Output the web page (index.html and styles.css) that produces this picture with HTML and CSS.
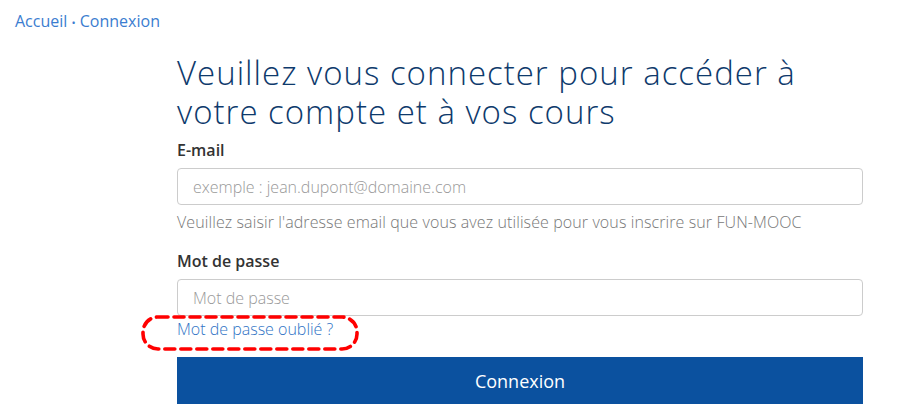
FILE: index.html
```html
<!DOCTYPE html>
<html lang="fr">
<head>
<meta charset="utf-8">
<title>Connexion</title>
<link rel="stylesheet" href="styles.css">
</head>
<body>
<nav class="breadcrumb"><a href="#">Accueil</a> <span class="sep">•</span> <a href="#">Connexion</a></nav>
<main class="login">
  <h1 class="title">Veuillez vous connecter pour accéder à votre compte et à vos cours</h1>
  <form class="form">
    <label class="label" for="email">E-mail</label>
    <input class="field" id="email" type="email" placeholder="exemple : jean.dupont@domaine.com">
    <p class="help">Veuillez saisir l'adresse email que vous avez utilisée pour vous inscrire sur FUN-MOOC</p>
    <label class="label label-pass" for="pass">Mot de passe</label>
    <input class="field field-pass" id="pass" type="password" placeholder="Mot de passe">
    <div class="forgot-row">
      <a class="forgot" href="#">Mot de passe oublié ?</a>
      <svg class="mark" width="218" height="36" viewBox="0 0 218 36" aria-hidden="true"><rect x="2" y="2" width="214" height="32" rx="15" ry="15" fill="none" stroke="#f00" stroke-width="3.6" stroke-dasharray="10 6" stroke-linecap="round"/></svg>
    </div>
    <button class="submit" type="button">Connexion</button>
  </form>
</main>
</body>
</html>
```
FILE: styles.css
```css
* { box-sizing: border-box; }
body {
  margin: 0;
  font-family: "Open Sans", Lato, sans-serif;
  background: #fff;
  color: #333;
}
.breadcrumb {
  padding: 11px 0 0 15px;
  font-size: 16px;
  line-height: 20px;
  color: #3b7dd0;
}
.breadcrumb a { color: #3b7dd0; text-decoration: none; }
.breadcrumb .sep { font-size: 11px; }
.login {
  margin-left: 177px;
  width: 686px;
}
.title {
  margin: 20px 0 0;
  font-size: 33px;
  font-weight: 300;
  line-height: 39px;
  letter-spacing: 1px;
  color: #0e3a6c;
}
.form { display: flex; flex-direction: column; }
.label {
  margin-top: 9px;
  font-size: 16px;
  font-weight: 600;
  line-height: 20px;
  color: #333;
}
.label-pass { margin-top: 19px; }
.field {
  margin-top: 8px;
  height: 37px;
  border: 1px solid #ccc;
  border-radius: 4px;
  padding: 0 15px;
  font-family: inherit;
  font-size: 16px;
  font-weight: 300;
  color: #555;
}
.field::placeholder { color: #999; }
.help {
  margin: 7px 0 0;
  font-size: 16px;
  font-weight: 300;
  line-height: 20px;
  letter-spacing: 0.1px;
  color: #777;
}
.forgot-row {
  position: relative;
  margin-top: 3px;
  height: 20px;
  line-height: 20px;
}
.forgot {
  font-size: 16px;
  font-weight: 300;
  color: #2f73c5;
  text-decoration: none;
}
.mark {
  position: absolute;
  left: -36px;
  top: -4px;
}
.submit {
  margin-top: 18px;
  height: 47px;
  border: 0;
  background: #0b519f;
  color: #fff;
  font-family: inherit;
  font-size: 18px;
  font-weight: 400;
}
```
